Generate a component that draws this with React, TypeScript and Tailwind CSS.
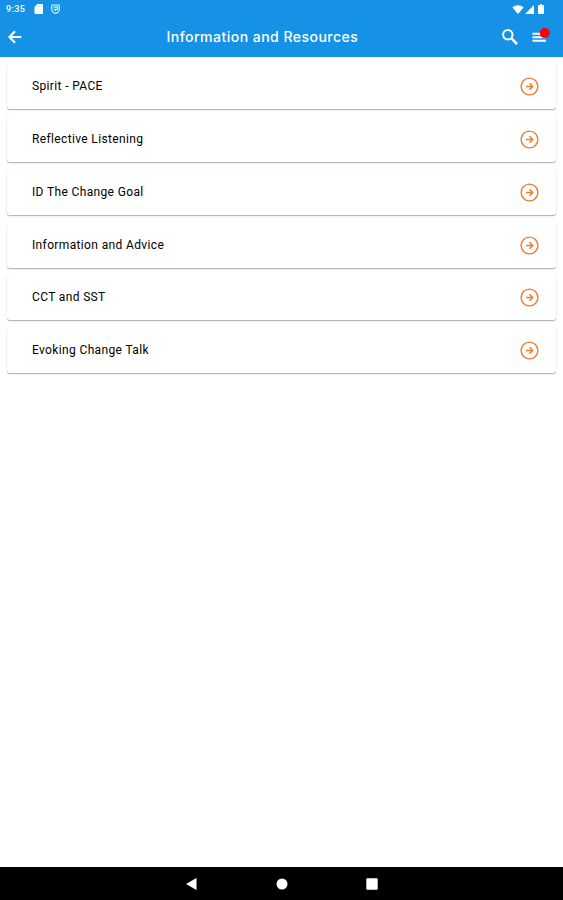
const topics = [
  'Spirit - PACE',
  'Reflective Listening',
  'ID The Change Goal',
  'Information and Advice',
  'CCT and SST',
  'Evoking Change Talk',
];

function StatusBar() {
  return (
    <div className="flex h-[18px] items-center pl-[6px] pr-[19px] text-white">
      <span className="w-[28px] font-['Roboto',sans-serif] text-[9px] font-medium leading-[18px] tracking-[0.4px]">9:35</span>
      <svg className="h-[10px] w-[9px]" viewBox="0 0 9 10" fill="currentColor">
        <path d="M3.5 0H8q1 0 1 1v8q0 1-1 1H1.5q-1 0-1-1V3Z" />
        <path d="M3.7 1.5v1.7M5.3 1.5v1.7M6.9 1.5v1.7" stroke="#1592e6" strokeOpacity=".4" strokeWidth=".5" />
      </svg>
      <svg className="ml-[8px] h-[10px] w-[9px]" viewBox="0 0 9 10" fill="none" stroke="currentColor">
        <path d="M1.6 1h5.8q.9 0 .9.9v3.3c0 2-1.4 3.4-3.8 4.2C2.1 8.6.7 7.2.7 5.2V1.9Q.7 1 1.6 1Z" strokeWidth="1.1" opacity=".9" />
        <path d="M2.5 3.1h4v2.3h-4M4.5 5.3v2" strokeWidth="1.1" opacity=".85" />
      </svg>
      <div className="ml-auto flex items-center">
        <svg className="h-[9px] w-[12px]" viewBox="0 0 12 9" fill="currentColor">
          <path d="M.3 2.3Q6-1.8 11.7 2.3L6 9Z" />
        </svg>
        <svg className="ml-px h-[9px] w-[9px]" viewBox="0 0 9 9" fill="currentColor">
          <path d="M0 9 9 0v9Z" />
        </svg>
        <svg className="ml-[4px] h-[10px] w-[6px]" viewBox="0 0 6 10" fill="currentColor">
          <path d="M2 0h2v1h1.3q.7 0 .7.7v7.6q0 .7-.7.7H.7q-.7 0-.7-.7V1.7Q0 1 .7 1H2Z" />
        </svg>
      </div>
    </div>
  );
}

function AppBar() {
  return (
    <div className="flex h-[38px] items-center pl-[8px] pr-[13px] text-white">
      <svg className="h-[14px] w-[14px]" viewBox="0 0 14 14" fill="none" stroke="currentColor" strokeWidth="2.1">
        <path d="M13.3 7H1.7M7 1.2 1.4 7 7 12.8" />
      </svg>
      <h1 className="ml-[144.5px] whitespace-nowrap font-['Inter',sans-serif] text-[14px] font-medium leading-[20px] tracking-[0.48px]">
        Information and Resources
      </h1>
      <div className="ml-auto flex items-center">
        <svg className="h-[16px] w-[16px]" viewBox="0 0 16 16" fill="none" stroke="currentColor" strokeWidth="2">
          <circle cx="5.8" cy="5.8" r="4.7" />
          <path d="m9.2 9.2 5.8 5.8" strokeWidth="2.5" />
        </svg>
        <svg className="ml-[14px] h-[18px] w-[18px]" viewBox="0 0 18 18" fill="none">
          <path d="M.5 5.7h12.5M.5 9.2h13.5M.5 12.7h13.5" stroke="white" strokeWidth="2.1" />
          <circle cx="12.8" cy="5.1" r="5" fill="#fb0007" />
        </svg>
      </div>
    </div>
  );
}

function ArrowBadge() {
  return (
    <svg className="h-[20px] w-[20px]" viewBox="0 0 20 20" fill="none" stroke="#ed7d31">
      <circle cx="10.5" cy="10.5" r="8.4" strokeWidth="1.4" />
      <path d="M7 10.5h6.5M10.5 7.3l3.2 3.2-3.2 3.2" strokeWidth="1.5" />
    </svg>
  );
}

export default function App() {
  return (
    <div className="flex h-[900px] w-[563px] flex-col overflow-hidden bg-white">
      <header className="h-[56.5px] shrink-0 bg-[#1592e6]">
        <StatusBar />
        <AppBar />
      </header>
      <main className="flex flex-1 flex-col gap-[6.8px] px-[7px] pt-[6.8px]">
        {topics.map((topic) => (
          <button
            key={topic}
            className="flex h-[46px] w-full items-center justify-between rounded-[3px] bg-white pl-[25px] pr-[17px] text-left shadow-[0_1px_1px_rgba(0,0,0,0.28),0_1px_3px_rgba(0,0,0,0.08)]"
          >
            <span className="font-['Roboto',sans-serif] text-[12px] font-normal leading-[16px] tracking-[0.36px] text-black">{topic}</span>
            <ArrowBadge />
          </button>
        ))}
      </main>
      <nav className="flex h-[33px] shrink-0 items-center justify-center gap-[78px] bg-black">
        <svg className="h-[12px] w-[12px]" viewBox="0 0 12 12" fill="white"><path d="M10.500 0v12L0 6Z" /></svg>
        <svg className="h-[12px] w-[12px]" viewBox="0 0 12 12" fill="white"><circle cx="6" cy="6" r="5.5" /></svg>
        <svg className="h-[12px] w-[12px]" viewBox="0 0 12 12" fill="white"><rect x=".3" y=".3" width="11.4" height="11.4" rx=".8" /></svg>
      </nav>
    </div>
  );
}
